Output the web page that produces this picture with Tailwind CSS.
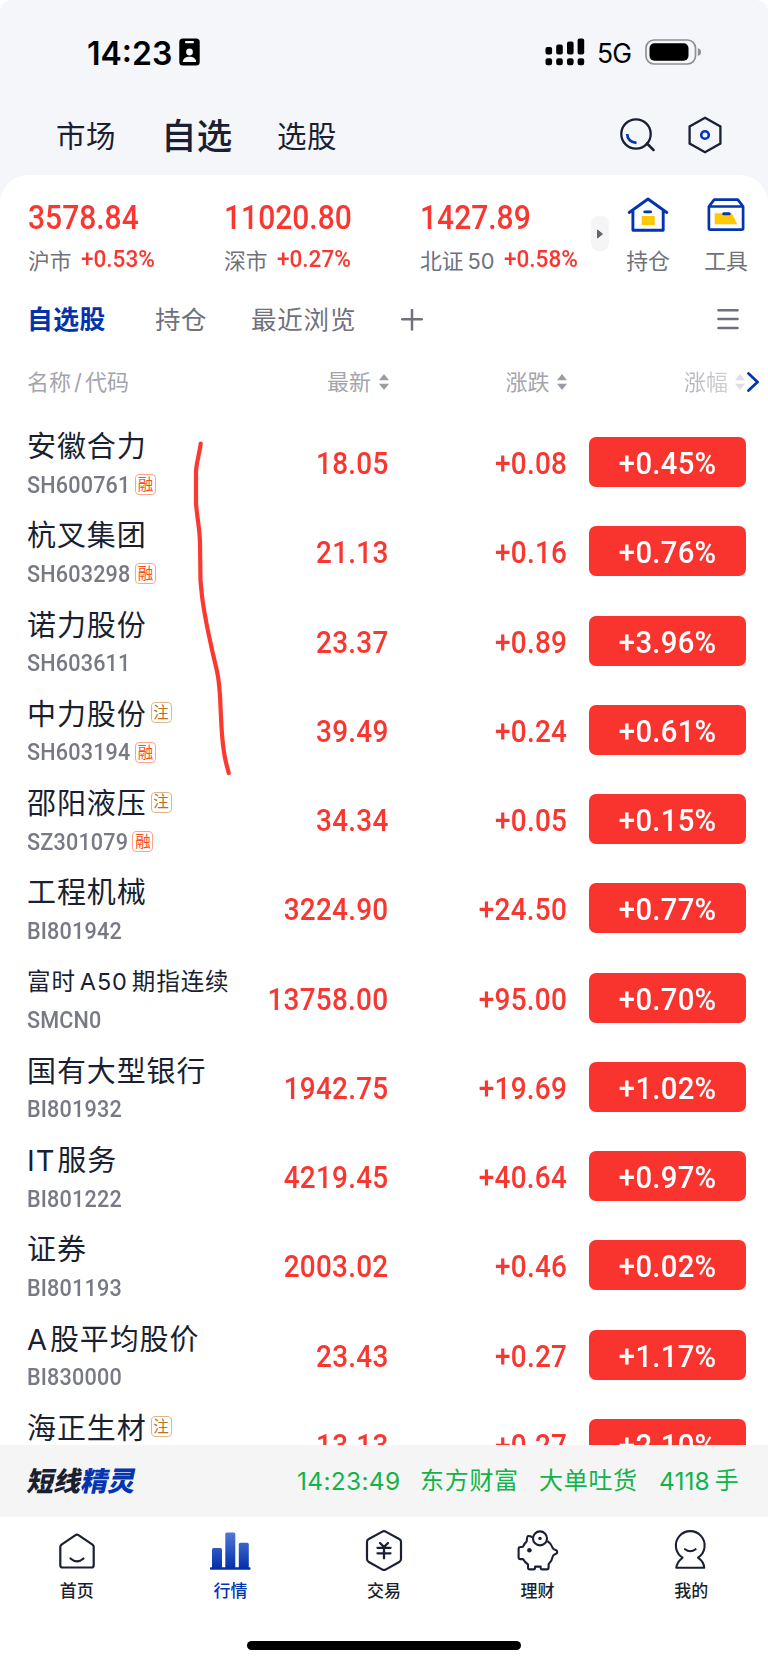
<!DOCTYPE html>
<html lang="zh-CN">
<head>
<meta charset="utf-8">
<title>自选</title>
<script src="https://cdn.jsdelivr.net/npm/@tailwindcss/browser@4"></script>
</head>
<body class="bg-white">
<div class="relative flex h-[1665px] w-[768px] flex-col overflow-hidden rounded-t-[12px] bg-[#f4f6fa] font-['Inter','Noto_Sans_CJK_SC',sans-serif] text-[#1a1f32]">

  <!-- status bar -->
  <div class="flex h-[100px] shrink-0 items-center justify-between pt-[4px] pr-[66px] pl-[87px] text-black">
    <div class="flex items-center">
      <span class="w-[84px] pt-[3px] text-[32px] leading-none font-[560] tracking-[0px] whitespace-nowrap">14:23</span>
      <svg class="ml-[8px] h-[28px] w-[21px]" viewBox="0 0 21 28"><rect x=".3" y=".5" width="20.4" height="27" rx="3.5" fill="#000"/><rect x="6" y="3" width="9" height="2.2" rx="1" fill="#f4f6fa"/><circle cx="10.5" cy="14" r="3.4" fill="#f4f6fa"/><path d="M3.8 24c0-3.4 3-5.3 6.7-5.3s6.7 1.900 6.700 5.300z" fill="#f4f6fa"/></svg>
    </div>
    <div class="flex items-center">
      <svg class="h-[28px] w-[40px]" viewBox="0 0 40 28"><g fill="#000"><rect x=".5" y="9" width="6.600" height="7.500" rx="2"/><rect x="11.200" y="6.500" width="6.600" height="10" rx="2"/><rect x="22" y="3.500" width="6.600" height="13" rx="2"/><rect x="32.600" y=".5" width="6.600" height="16" rx="2"/><rect x=".5" y="20.300" width="6.600" height="7" rx="2.200"/><rect x="11.200" y="20.300" width="6.600" height="7" rx="2.200"/><rect x="22" y="20.300" width="6.600" height="7" rx="2.200"/><rect x="32.600" y="20.300" width="6.600" height="7" rx="2.200"/></g></svg>
      <span class="ml-[12px] w-[36px] pt-[3px] text-[26.5px] leading-none tracking-[-0.8px] whitespace-nowrap">5G</span>
      <svg class="ml-[12px] h-[26px] w-[57px]" viewBox="0 0 57 26"><rect x="1" y="1" width="49.500" height="24" rx="8" fill="none" stroke="#8e9094" stroke-width="1.700"/><rect x="4.500" y="4.300" width="39" height="17.500" rx="5" fill="#000"/><path d="M52.800 9.200c2.400.6 3.300 2 3.300 3.900s-.9 3.300-3.300 3.900z" fill="#8e9094"/></svg>
    </div>
  </div>

  <!-- page tabs -->
  <div class="flex h-[75px] shrink-0 items-center justify-between pr-[46px] pb-[2px] pl-[56px]">
    <div class="flex items-center pt-[1px] whitespace-nowrap">
      <span class="w-[105px] text-[29.500px] leading-none tracking-[0.6px]">市场</span>
      <span class="w-[116px] text-[35.500px] leading-none font-medium tracking-[0.3px]">自选</span>
      <span class="text-[29.500px] leading-none tracking-[0.6px]">选股</span>
    </div>
    <div class="flex items-center gap-[33px] pb-[3px]">
      <svg class="h-[38px] w-[36px]" viewBox="0 0 36 38" fill="none" stroke="#1a1f32" stroke-width="2.300"><circle cx="17" cy="18" r="14.700"/><path d="M28 27.500l6.500 6.500" stroke-width="2.500" stroke-linecap="round"/><path d="M8.200 18c0 5 3.700 8.700 9.300 8.800" stroke="#0434b8" stroke-width="2.700"/></svg>
      <svg class="h-[38px] w-[34px]" viewBox="0 0 34 38" fill="none" stroke="#1a1f32" stroke-width="2.300"><path d="M17 1.800l15.400 8.600v17.200L17 36.200 1.600 27.600V10.400z"/><circle cx="17" cy="19" r="3.800" stroke="#0434b8" stroke-width="2.600"/></svg>
    </div>
  </div>

  <!-- main sheet -->
  <div class="relative flex h-[1270px] shrink-0 flex-col overflow-hidden rounded-t-[28px] bg-white">
    <!-- market indices -->
    <div class="flex h-[110px] shrink-0 pl-[28px] whitespace-nowrap">
      <div class="flex w-[196px] flex-col pt-[26px]">
        <span class="w-fit origin-left scale-x-[.91] font-['Roboto'] text-[33px] leading-[34px] font-medium text-[#f93630]">3578.84</span>
        <div class="mt-[13px] flex h-[26px] items-center"><span class="w-[53px] text-[21.800px]  text-[#6f717c]">沪市</span><span class="origin-left scale-x-[.98] pb-[2px] font-['Roboto'] text-[23px] font-medium text-[#f93630]">+0.53%</span></div>
      </div>
      <div class="flex w-[196px] flex-col pt-[26px]">
        <span class="w-fit origin-left scale-x-[.91] font-['Roboto'] text-[33px] leading-[34px] font-medium text-[#f93630]">11020.80</span>
        <div class="mt-[13px] flex h-[26px] items-center"><span class="w-[53px] text-[21.800px] text-[#6f717c]">深市</span><span class="origin-left scale-x-[.98] pb-[2px] font-['Roboto'] text-[23px] font-medium text-[#f93630]">+0.27%</span></div>
      </div>
      <div class="flex w-[171px] flex-col pt-[26px]">
        <span class="w-fit origin-left scale-x-[.91] font-['Roboto'] text-[33px] leading-[34px] font-medium text-[#f93630]">1427.89</span>
        <div class="mt-[13px] flex h-[26px] items-center"><span class="flex w-[84px] gap-[4px] text-[21.800px] text-[#6f717c]"><span>北证</span><span>50</span></span><span class="origin-left scale-x-[.98] pb-[2px] font-['Roboto'] text-[23px] font-medium text-[#f93630]">+0.58%</span></div>
      </div>
      <div class="mt-[41px] flex h-[35px] w-[18px] items-center justify-center rounded-[8px] bg-[#f5f5f5]"><svg class="h-[10px] w-[6px]" viewBox="0 0 6 10"><path d="M.5 1v8L5.500 5z" fill="#63656f" stroke="#63656f" stroke-linejoin="round"/></svg></div>
      <div class="ml-[17px] flex w-[44px] flex-col items-center pt-[22px]">
        <svg class="h-[36px] w-[42px]" viewBox="0 0 42 36"><path d="M2.200 15.500L21 2l18.800 13.500M5.900 13.500v19.800h30.300V13.500" fill="none" stroke="#0434b0" stroke-width="2.900" stroke-linecap="round" stroke-linejoin="round"/><path d="M17.700 14.800h6" stroke="#0434b0" stroke-width="2.800" stroke-linecap="round"/><rect x="14.700" y="19" width="13" height="9" fill="#ffc803"/></svg>
        <span class="mt-[15px] text-[21.800px] leading-[26px] text-[#6f717c]">持仓</span>
      </div>
      <div class="ml-[34px] flex w-[44px] flex-col items-center pt-[22px]">
        <svg class="h-[36px] w-[40px]" viewBox="0 0 40 36"><path d="M8.700 16.300h17l5.700 11h-22.700z" fill="#ffc803"/><path d="M2.900 9.500h34.200v21.700c0 .9-.5 1.400-1.400 1.400H4.300c-.9 0-1.400-.5-1.400-1.400zM2.900 9.500L8.200 2.700h23.600l5.300 6.800" fill="none" stroke="#0434b0" stroke-width="2.700" stroke-linejoin="round"/><path d="M17.700 16.700h5.500" stroke="#0434b0" stroke-width="3" stroke-linecap="round"/></svg>
        <span class="mt-[15px] text-[21.800px] leading-[26px] text-[#6f717c]">工具</span>
      </div>
    </div>

    <!-- watchlist groups -->
    <div class="flex h-[70px] shrink-0 items-center pr-[29px] pl-[27px] whitespace-nowrap text-[#6f717c]">
      <span class="w-[128px] text-[25.800px] leading-none font-bold tracking-[0.4px] text-[#0432ab]">自选股</span>
      <span class="w-[96px] text-[25.500px] leading-none tracking-[0.5px]">持仓</span>
      <span class="w-[150px] text-[25.500px] leading-none tracking-[0.8px]">最近浏览</span>
      <svg class="h-[22px] w-[22px]" viewBox="0 0 22 22"><path d="M1.200 10.300h19.600M11 .8v19.600" stroke="#6f717c" stroke-width="2.500" stroke-linecap="round"/></svg>
      <svg class="ml-auto h-[22px] w-[22px]" viewBox="0 0 22 22"><path d="M1.500 1.200h19M1.500 10h19M1.500 19h19" stroke="#6f717c" stroke-width="2.600" stroke-linecap="round"/></svg>
    </div>

    <!-- column heads -->
    <div class="flex h-[62px] shrink-0 items-center pb-[8px] pl-[27px] text-[22px] leading-none whitespace-nowrap text-[#a4a5ac]">
      <span class="flex w-[300px] gap-[2px]"><span>名称</span><span class="translate-x-[1px]">/</span><span class="pl-[2px]">代码</span></span>
      <span class="w-[52px]">最新</span><svg class="h-[16px] w-[10px]" viewBox="0 0 10 16"><path d="M5 0L10 6.200H0zM5 16L10 9.800H0z" fill="#9b9ca4"/></svg>
      <span class="ml-[116.500px] w-[51.500px]">涨跌</span><svg class="h-[16px] w-[10px]" viewBox="0 0 10 16"><path d="M5 0L10 6.200H0zM5 16L10 9.800H0z" fill="#9b9ca4"/></svg>
      <span class="ml-[117px] w-[51px] bg-gradient-to-r from-[#b0b1b8] to-[#d6d7da] bg-clip-text text-transparent">涨幅</span><svg class="h-[16px] w-[10px]" viewBox="0 0 10 16"><path d="M5 0L10 6.200H0zM5 16L10 9.800H0z" fill="#dfdfe2"/></svg>
      <svg class="ml-[2px] h-[20px] w-[12px]" viewBox="0 0 12 20"><path d="M1.500 1.500L10.500 10l-9 8.500" fill="none" stroke="#0434b0" stroke-width="2.700" stroke-linecap="round"/></svg>
    </div>

    <div id="rows" class="flex shrink-0 flex-col pt-[0.4px]"></div>

    <!-- hand-drawn mark -->
    <svg class="pointer-events-none absolute top-[260px] left-[185px] h-[350px] w-[55px]" viewBox="185 435 55 350"><path d="M200.700 443.500C199.500 454 196.200 463 196 472V503C197 518 200 530 200 543.500L200.500 580C201.500 592 202 597 203 603.500 206 622 208 632 210.700 643.500 214 660 217 668 218.500 680 220.500 695 220.300 705 221 717 221.600 730 222 740 224 752 225 760 227 766 228.700 773" fill="none" stroke="#fa3a30" stroke-width="4.200" stroke-linecap="round"/></svg>
  </div>

  <!-- ticker -->
  <div class="flex h-[72px] shrink-0 items-center bg-[#f5f5f5] pr-[28px] pl-[28px] whitespace-nowrap">
    <span class="flex -skew-x-12 text-[27px] leading-none font-black"><span>短线</span><span class="text-[#0434b0]">精灵</span></span>
    <div class="ml-auto flex items-center text-[24px] leading-none text-[#11b34a]">
      <span class="w-[123px] text-[24.500px] tracking-[0.3px]">14:23:49</span><span class="w-[119px] tracking-[0.7px]">东方财富</span><span class="w-[120px] tracking-[0.7px]">大单吐货</span><span class="flex w-[81px] gap-[5px]"><span class="text-[24.500px] tracking-[0.1px]">4118</span><span>手</span></span>
    </div>
  </div>

  <!-- tab bar -->
  <div class="grid h-[148px] shrink-0 grid-cols-5 bg-white pt-[13px] text-[17px] leading-[22px] font-medium">
    <div class="flex flex-col items-center gap-[8px]">
      <svg class="h-[42px] w-[42px]" viewBox="0 0 42 42" fill="none" stroke="#1a1f32" stroke-width="2.200" stroke-linejoin="round" stroke-linecap="round"><path d="M19.500 5.200a2.600 2.600 0 0 1 3 0L36.500 14.600c.8.6 1.200 1.300 1.200 2.300v18.300c0 1.600-.8 2.300-2.300 2.300H6.600c-1.500 0-2.300-.7-2.300-2.300V16.900c0-1 .4-1.700 1.200-2.300z"/><path d="M14.500 28.500c4 3.700 9 3.700 13 0"/></svg>
      <span>首页</span>
    </div>
    <div class="flex flex-col items-center gap-[8px] text-[#0434b0]">
      <svg class="h-[42px] w-[42px]" viewBox="0 0 42 42"><defs><linearGradient id="bar" gradientUnits="userSpaceOnUse" x1="0" y1="2" x2="0" y2="38"><stop offset="0" stop-color="#5279d9"/><stop offset="1" stop-color="#0430ab"/></linearGradient></defs><g fill="url(#bar)"><rect x="3" y="18" width="10" height="21" rx="1.500"/><rect x="16.300" y="2.500" width="10" height="36.500" rx="1.500"/><rect x="29.800" y="12.800" width="10" height="26.200" rx="1.500"/></g><rect x="1" y="37.300" width="40.500" height="2.400" rx=".6" fill="#0430ab"/></svg>
      <span>行情</span>
    </div>
    <div class="flex flex-col items-center gap-[8px]">
      <svg class="h-[42px] w-[42px]" viewBox="0 0 42 42" fill="none" stroke="#1a1f32" stroke-width="2.200" stroke-linejoin="round" stroke-linecap="round"><path d="M19.400 1.600a3.600 3.600 0 0 1 3.200 0L36.200 9c1.200.6 1.800 1.600 1.800 3v17c0 1.400-.6 2.400-1.800 3L22.600 39.600a3.600 3.600 0 0 1-3.200 0L5.800 32c-1.200-.6-1.800-1.600-1.800-3V12c0-1.400.6-2.400 1.800-3z"/><path d="M17 13l4 4 4-4M14.500 17.800h13M14.500 23.300h13M21 17.800v10.500" stroke-width="2.300"/></svg>
      <span>交易</span>
    </div>
    <div class="flex flex-col items-center gap-[8px]">
      <svg class="h-[42px] w-[42px]" viewBox="0 0 42 42" fill="none" stroke="#1a1f32" stroke-width="2.100" stroke-linejoin="round"><path d="M15.500 7.300c-1.700-.9-3.300-1.600-4.500-1.300-1.100.4-.9 3-1.400 5.600-1.500 1.300-2.400 2.700-3.100 4.200-.4 1-1 1.200-2 1.200h-1c-1.300 0-1.900.6-1.900 1.900v8.300c0 1.300.6 1.900 1.900 1.900H6c1.300 2.300 3.100 4.200 5 5.400v3c0 1.300.6 1.900 1.900 1.900h3.300c1.300 0 1.900-.6 1.900-1.900v-.9h5.500v.9c0 1.300.6 1.900 1.900 1.900h4.200c1.300 0 1.900-.6 1.900-1.900v-3.200c2.200-2 3.600-4.900 4.300-8.200.4-1 1.300-1.700 2.800-2.100 2-.5 2-3.300 0-3.900-1.600-.4-2.600-1-3-2.200-1-2.900-2.800-5.300-5.400-7.100"/><circle cx="23" cy="8.400" r="7"/><circle cx="23" cy="8.400" r="1.700" fill="#1a1f32" stroke="none"/><circle cx="12.400" cy="20.300" r="2.300" fill="#1a1f32" stroke="none"/></svg>
      <span>理财</span>
    </div>
    <div class="flex flex-col items-center gap-[8px]">
      <svg class="h-[42px] w-[42px]" viewBox="0 0 42 42" fill="none" stroke="#1a1f32" stroke-width="2.100" stroke-linejoin="round" stroke-linecap="round"><path d="M12.500 27.700A14.400 14.400 0 1 1 28 27.700C31.500 30.200 34 33.500 34.200 37.800H6.300C6.500 33.500 9.500 30.200 12.500 27.700z"/><path d="M15 19.200c3.300 2.600 7.300 2.600 10.600 0"/></svg>
      <span>我的</span>
    </div>
  </div>
  <div class="absolute bottom-[15px] left-[247px] h-[9px] w-[274px] rounded-full bg-black"></div>
</div>

<script>
const stocks = [
  ['安徽合力','SH600761','融','', '18.05','+0.08','+0.45%'],
  ['杭叉集团','SH603298','融','', '21.13','+0.16','+0.76%'],
  ['诺力股份','SH603611','','', '23.37','+0.89','+3.96%'],
  ['中力股份','SH603194','融','注', '39.49','+0.24','+0.61%'],
  ['邵阳液压','SZ301079','融','注', '34.34','+0.05','+0.15%'],
  ['工程机械','BI801942','','', '3224.90','+24.50','+0.77%'],
  ['富时|A50|期指连续','SMCN0','','', '13758.00','+95.00','+0.70%'],
  ['国有大型银行','BI801932','','', '1942.75','+19.69','+1.02%'],
  ['IT|服务','BI801222','','', '4219.45','+40.64','+0.97%'],
  ['证券','BI801193','','', '2003.02','+0.46','+0.02%'],
  ['A|股平均股价','BI830000','','', '23.43','+0.27','+1.17%'],
  ['海正生材','','','注', '13.13','+0.27','+2.10%'],
];
document.getElementById('rows').innerHTML = stocks.map(([name, code, rong, zhu, price, chg, pct]) => {
  const size = name.length > 9 ? 'gap-[4px] text-[23.500px] tracking-[0.9px]' : 'gap-[2px] text-[29px] tracking-[0.9px]';
  const parts = name.split('|').map(p => `<span>${p}</span>`).join('');
  const z = zhu ? '<span class="mb-[3px] ml-[4px] flex h-[21px] w-[21px] items-center justify-center rounded-[4px] border border-[#deb68c] text-[15.5px] leading-none text-[#b9701f]">注</span>' : '';
  const r = rong ? '<span class="flex h-[21px] w-[21px] items-center justify-center rounded-[4px] border border-[#fda58c] text-[15.5px] leading-none text-[#fb4a1b]">融</span>' : '';
  return `<div class="flex h-[89.27px] items-center pl-[27px] whitespace-nowrap">
    <div class="flex h-[89px] w-[201px] flex-col pt-[12px]">
      <div class="flex h-[34px] items-center"><span class="flex leading-none ${size}">${parts}</span>${z}</div>
      <div class="mt-[8px] flex h-[26px] items-center"><span class="mr-[-7px] origin-left scale-x-[.9] font-['Roboto'] text-[24px] leading-none font-medium tracking-[0.2px] text-[#777985]">${code}</span>${r}</div>
    </div>
    <div class="flex w-[160.500px] justify-end pt-[3px]"><span class="origin-right scale-x-[.9] font-['Roboto'] text-[31px] leading-none font-medium tracking-[0.3px] text-[#f93630]">${price}</span></div>
    <div class="flex w-[178.500px] justify-end pt-[3px]"><span class="origin-right scale-x-[.9] font-['Roboto'] text-[31px] leading-none font-medium tracking-[0.3px] text-[#f93630]">${chg}</span></div>
    <div class="ml-[22.3px] flex h-[50px] w-[157px] items-center justify-center rounded-[7px] bg-[#f9332e]"><span class="scale-x-[.945] pt-[3px] font-['Roboto'] text-[31px] leading-none font-medium tracking-[0.3px] text-white">${pct}</span></div>
  </div>`;
}).join('');
</script>
</body>
</html>
